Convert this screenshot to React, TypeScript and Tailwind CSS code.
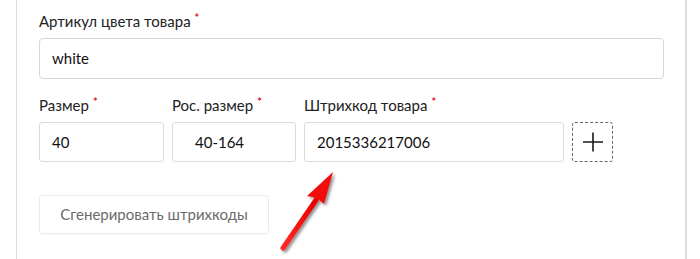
import React from "react";

const Req = () => (
  <span className="relative top-[-5px] ml-[4px] text-[11px] font-bold text-[#e2132e]">*</span>
);

function Label({ children }: { children: React.ReactNode }) {
  return (
    <div className="h-[20px] text-[15px] leading-[20px] text-[#222]">
      {children}
      <Req />
    </div>
  );
}

function Field({ value, w, pl = "pl-[12px]" }: { value: string; w: string; pl?: string }) {
  return (
    <div
      className={`${w} ${pl} h-[40px] flex items-center rounded-[3px] border border-[#dadada] text-[15px] text-[#111]`}
    >
      {value}
    </div>
  );
}

export default function App() {
  return (
    <div
      className="relative h-[259px] w-[700px] overflow-hidden bg-white"
      style={{ fontFamily: "Lato, 'Open Sans', sans-serif" }}
    >
      <div className="ml-[16px] h-full w-[671px] border-l border-r-2 border-[#dcdcdc] pl-[22px] pt-[11px]">
        <Label>Артикул цвета товара</Label>
        <div className="mt-[7px] flex h-[41px] w-[625px] items-center rounded-[4px] border border-[#d6d6d6] pl-[12px] text-[15px] text-[#111]">
          white
        </div>

        <div className="mt-[16px] flex gap-[8px]">
          <div className="flex flex-col gap-[7px]">
            <Label>Размер</Label>
            <Field value="40" w="w-[125px]" />
          </div>
          <div className="flex flex-col gap-[7px]">
            <Label>Рос. размер</Label>
            <Field value="40-164" w="w-[124px]" pl="pl-[22px]" />
          </div>
          <div className="flex flex-col gap-[7px]">
            <Label>Штрихкод товара</Label>
            <Field value="2015336217006" w="w-[260px]" />
          </div>
          <div className="flex flex-col justify-end">
            <div className="flex h-[40px] w-[41px] items-center justify-center rounded-[3px] border border-dashed border-[#666]">
              <svg width="22" height="22" viewBox="0 0 22 22">
                <path d="M11 1.5V20.5M1 11H21" stroke="#1a1a1a" strokeWidth="1.6" />
              </svg>
            </div>
          </div>
        </div>

        <button className="mt-[33px] flex h-[39px] w-[230px] items-center justify-center rounded-[3px] border border-[#ececec] bg-white text-[15px] text-[#6b6b6b] shadow-[0_1px_1px_rgba(0,0,0,0.03)]">
          Сгенерировать штрихкоды
        </button>
      </div>

      <svg
        className="absolute left-[270px] top-[160px]"
        width="80"
        height="100"
        viewBox="0 0 80 100"
      >
        <defs>
          <filter id="sh" x="-30%" y="-30%" width="160%" height="160%">
            <feDropShadow dx="2" dy="2" stdDeviation="1.5" floodColor="#000" floodOpacity="0.45" />
          </filter>
          <linearGradient id="rg" x1="0" y1="0" x2="1" y2="0">
            <stop offset="0" stopColor="#ff2a2a" />
            <stop offset="1" stopColor="#e60000" />
          </linearGradient>
        </defs>
        <g filter="url(#sh)">
          <path
            d="M13 88 L46 40"
            stroke="url(#rg)"
            strokeWidth="5"
            strokeLinecap="round"
            fill="none"
          />
          <polygon points="63,12 37,36 47,38 54,44" fill="#f20d0d" />
        </g>
      </svg>
    </div>
  );
}
